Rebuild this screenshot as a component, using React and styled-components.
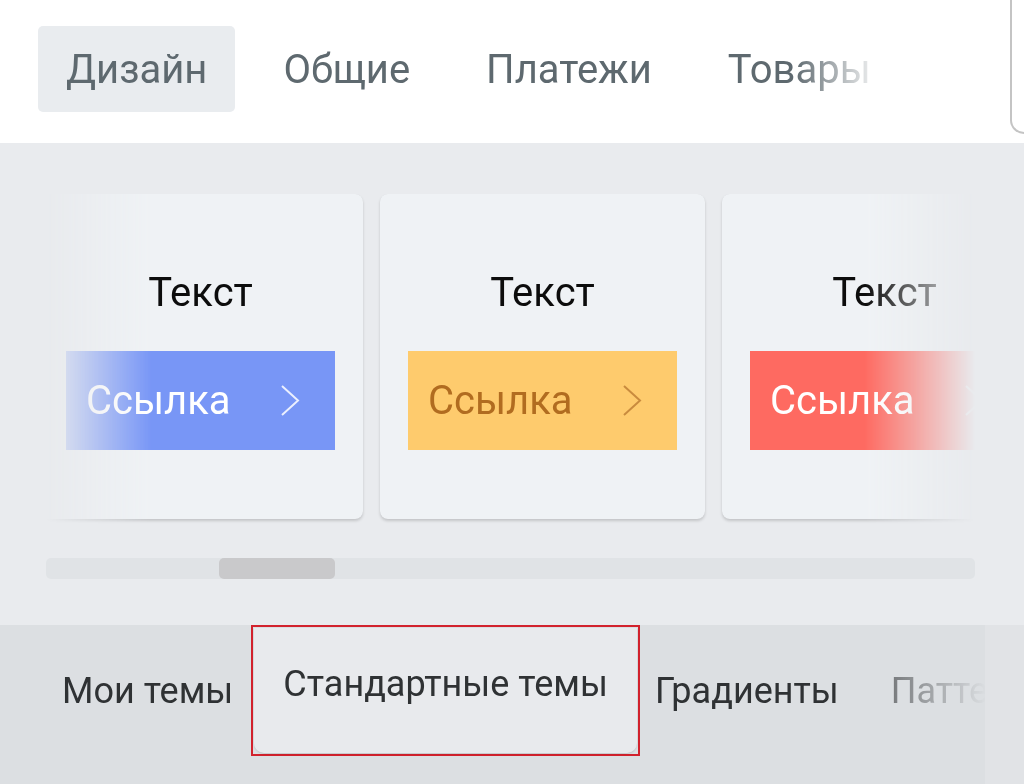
import React from "react";
import styled, { createGlobalStyle } from "styled-components";

const GlobalStyle = createGlobalStyle`
  html, body {
    margin: 0;
    padding: 0;
    background: #ffffff;
  }
  body {
    font-family: Roboto, "Noto Sans", "Liberation Sans", sans-serif;
    -webkit-font-smoothing: antialiased;
  }
  #root {
    width: 1024px;
    height: 784px;
    overflow: hidden;
  }
`;

const Page = styled.div`
  display: flex;
  flex-direction: column;
  width: 1024px;
  height: 784px;
`;

// top section tabs
const TopBar = styled.div`
  display: flex;
  align-items: flex-start;
  height: 143px;
  background: #ffffff;
`;

const TopTabs = styled.div`
  display: flex;
  gap: 20px;
  width: 860px;
  margin: 26px 0 0 38px;
  -webkit-mask-image: linear-gradient(to right, #000 0, #000 755px, transparent 845px);
  mask-image: linear-gradient(to right, #000 0, #000 755px, transparent 845px);
`;

const TopTab = styled.div`
  flex: none;
  height: 86px;
  padding: 0 28px;
  display: flex;
  align-items: center;
  border-radius: 5px;
  font-size: 40px;
  color: #5e696f;
  background: ${(p) => (p.$active ? "#e9ecef" : "transparent")};
`;

const Edge = styled.div`
  margin-left: auto;
  width: 12px;
  height: 132px;
  border-left: 2px solid #c4c4c4;
  border-bottom: 2px solid #c4c4c4;
  border-bottom-left-radius: 14px;
`;

// theme previews
const Preview = styled.div`
  display: flex;
  flex-direction: column;
  height: 482px;
  padding: 51px 0 0 46px;
  box-sizing: border-box;
  background: #e9ebee;
`;

const Viewport = styled.div`
  width: 929px;
  height: 332px;
  overflow: hidden;
  -webkit-mask-image: linear-gradient(to right, transparent 0, #000 105px, #000 calc(100% - 110px), transparent 100%);
  mask-image: linear-gradient(to right, transparent 0, #000 105px, #000 calc(100% - 110px), transparent 100%);
`;

const CardRow = styled.div`
  display: flex;
  gap: 17px;
  margin-left: -8px;
`;

const Card = styled.div`
  flex: none;
  width: 325px;
  height: 325px;
  box-sizing: border-box;
  padding-top: 75px;
  display: flex;
  flex-direction: column;
  align-items: stretch;
  border-radius: 8px;
  background: #eff2f5;
  box-shadow: 0 2px 3px rgba(0, 0, 0, 0.16), 0 0 1px rgba(0, 0, 0, 0.08);
`;

const CardTitle = styled.div`
  text-align: center;
  font-size: 40px;
  line-height: 48px;
  color: #0c0c0c;
  margin-bottom: 34px;
`;

const LinkButton = styled.div`
  height: 99px;
  margin: 0 28px;
  padding: 0 35px 0 20px;
  display: flex;
  align-items: center;
  justify-content: space-between;
  font-size: 40px;
  background: ${(p) => p.$bg};
  color: ${(p) => p.$fg};
`;

const Track = styled.div`
  width: 929px;
  height: 21px;
  margin-top: 32px;
  border-radius: 5px;
  background: #e0e3e6;
  display: flex;
`;

const Thumb = styled.div`
  width: 116px;
  height: 21px;
  border-radius: 5px;
  background: #c9c9cb;
`;

// bottom category tabs
const BottomBar = styled.div`
  flex: 1;
  display: flex;
  align-items: flex-start;
  background: #e1e3e6;
`;

const BottomTabs = styled.div`
  flex: none;
  width: 985px;
  height: 100%;
  display: flex;
  align-items: flex-start;
  padding-left: 36px;
  box-sizing: border-box;
  background: #dcdfe2;
`;

const TabLabels = styled.div`
  display: flex;
  align-items: flex-start;
  -webkit-mask-image: linear-gradient(to right, #000 0, #000 820px, rgba(0, 0, 0, 0.55) 860px, transparent 950px);
  mask-image: linear-gradient(to right, #000 0, #000 820px, rgba(0, 0, 0, 0.55) 860px, transparent 950px);
`;

const BottomTab = styled.div`
  flex: none;
  height: 131px;
  padding: 0 26px;
  display: flex;
  align-items: center;
  font-size: 36px;
  color: #2f3234;
`;

const Outline = styled.div`
  flex: none;
  height: 131px;
  box-sizing: border-box;
  margin: 0 -11px 0 -8px;
  padding: 1px;
  border: 2px solid #d2222d;
  display: flex;
`;

const Pill = styled.div`
  flex: 1;
  padding: 0 29px 14px;
  display: flex;
  align-items: center;
  border-radius: 0 0 10px 10px;
  background: #e8eaed;
  box-shadow: 0 1px 2px rgba(0, 0, 0, 0.12);
  font-size: 36px;
  color: #2f3234;
`;

const Chevron = ({ color }) => (
  <svg width="20" height="33" viewBox="0 0 20 33" fill="none">
    <polyline points="2,2 18,16.5 2,31" stroke={color} strokeWidth="2" />
  </svg>
);

const themes = [
  { bg: "#7896f6", fg: "#ffffff", arrow: "rgba(255,255,255,0.85)" },
  { bg: "#fecb6d", fg: "#b16c20", arrow: "#c98b3e" },
  { bg: "#fe6a61", fg: "#ffffff", arrow: "rgba(255,255,255,0.85)" },
];

const App = () => {
  return (
    <Page>
      <GlobalStyle />
      <TopBar>
        <TopTabs>
          <TopTab $active>Дизайн</TopTab>
          <TopTab>Общие</TopTab>
          <TopTab>Платежи</TopTab>
          <TopTab>Товары</TopTab>
        </TopTabs>
        <Edge />
      </TopBar>

      <Preview>
        <Viewport>
          <CardRow>
            {themes.map((t, i) => (
              <Card key={i}>
                <CardTitle>Текст</CardTitle>
                <LinkButton $bg={t.bg} $fg={t.fg}>
                  <span>Ссылка</span>
                  <Chevron color={t.arrow} />
                </LinkButton>
              </Card>
            ))}
          </CardRow>
        </Viewport>
        <Track>
          <Thumb style={{ marginLeft: 173 }} />
        </Track>
      </Preview>

      <BottomBar>
        <BottomTabs>
          <TabLabels>
            <BottomTab>Мои темы</BottomTab>
            <Outline>
              <Pill>Стандартные темы</Pill>
            </Outline>
            <BottomTab>Градиенты</BottomTab>
            <BottomTab>Паттерны</BottomTab>
          </TabLabels>
        </BottomTabs>
      </BottomBar>
    </Page>
  );
};

export default App;
